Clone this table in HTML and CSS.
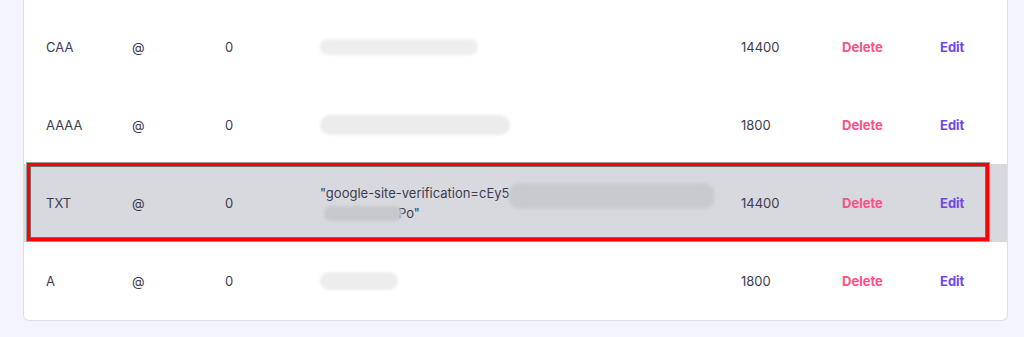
FILE: index.html
```html
<!DOCTYPE html>
<html lang="en">
<head>
<meta charset="utf-8">
<title>DNS records</title>
<link rel="stylesheet" href="styles.css">
</head>
<body>
<div class="page">
  <div class="card">
    <div class="row">
      <span class="cell">CAA</span>
      <span class="cell">@</span>
      <span class="cell">0</span>
      <span class="cell content"><span class="blob blob-caa"></span></span>
      <span class="cell">14400</span>
      <span class="cell action delete">Delete</span>
      <span class="cell action edit">Edit</span>
    </div>
    <div class="row">
      <span class="cell">AAAA</span>
      <span class="cell">@</span>
      <span class="cell">0</span>
      <span class="cell content"><span class="blob blob-aaaa"></span></span>
      <span class="cell">1800</span>
      <span class="cell action delete">Delete</span>
      <span class="cell action edit">Edit</span>
    </div>
    <div class="row row-highlight">
      <span class="cell">TXT</span>
      <span class="cell">@</span>
      <span class="cell">0</span>
      <span class="cell content txt">
        <span class="line">"google-site-verification=cEy5<span class="blob blob-txt1"></span></span>
        <span class="line"><span class="blob blob-txt2"></span>Po"</span>
      </span>
      <span class="cell">14400</span>
      <span class="cell action delete">Delete</span>
      <span class="cell action edit">Edit</span>
      <span class="marker"></span>
    </div>
    <div class="row">
      <span class="cell">A</span>
      <span class="cell">@</span>
      <span class="cell">0</span>
      <span class="cell content"><span class="blob blob-a"></span></span>
      <span class="cell">1800</span>
      <span class="cell action delete">Delete</span>
      <span class="cell action edit">Edit</span>
    </div>
  </div>
</div>
</body>
</html>
```

FILE: styles.css
```css
html, body {
  margin: 0;
  padding: 0;
  background: #f4f4fc;
}

body {
  font-family: "Inter", "Liberation Sans", sans-serif;
  font-size: 13px;
  color: #3d3c52;
}

.page {
  padding: 0 16px 16px 23px;
}

.card {
  width: 985px;
  box-sizing: border-box;
  background: #ffffff;
  border: 1px solid #dedfe6;
  border-top: none;
  border-radius: 0 0 6px 6px;
  padding-top: 8px;
  overflow: hidden;
}

.row {
  position: relative;
  display: grid;
  grid-template-columns: 86px 93px 95px 421px 101px 98px 60px;
  align-items: center;
  height: 78px;
  padding-left: 22px;
}

.row-highlight {
  background: #d8d9de;
}

.cell {
  white-space: nowrap;
  line-height: 20px;
}

.content {
  display: flex;
  flex-direction: column;
}

.txt .line {
  display: flex;
  align-items: center;
  height: 20px;
}

.action {
  font-weight: 700;
}

.delete {
  color: #fc5185;
}

.edit {
  color: #7148e8;
}

.blob {
  display: inline-block;
  border-radius: 10px;
  filter: blur(1.5px);
}

.blob-caa {
  width: 158px;
  height: 16px;
  background: #eeeeef;
}

.blob-aaaa {
  width: 190px;
  height: 20px;
  background: #ececed;
}

.blob-a {
  width: 78px;
  height: 18px;
  background: #ededee;
}

.blob-txt1 {
  width: 205px;
  height: 26px;
  margin-top: 6px;
  background: #c9cace;
}

.blob-txt2 {
  width: 78px;
  height: 15px;
  margin-left: 4px;
  margin-right: -4px;
  background: #c7c8cc;
}

.marker {
  position: absolute;
  left: 3px;
  top: -1px;
  width: 962px;
  height: 78px;
  box-sizing: border-box;
  border: 3px solid #ff0000;
  box-shadow: inset 0 0 0 1px #6f6f72, 0 0 0 1px #9a9a9e;
  pointer-events: none;
}
```
